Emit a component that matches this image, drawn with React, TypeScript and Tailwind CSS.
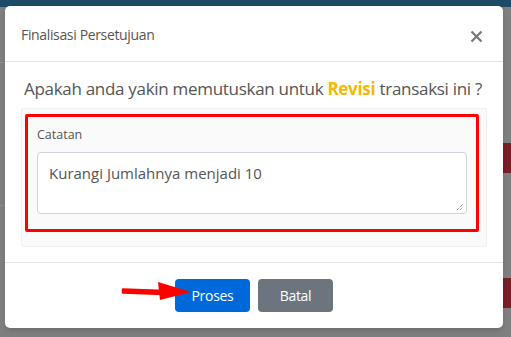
import React from 'react';

const font = { fontFamily: '"Open Sans", "Noto Sans", sans-serif' };

export default function App() {
  return (
    <div className="relative w-[511px] h-[337px] overflow-hidden bg-[#7f7f7f]" style={font}>
      {/* dimmed page behind the modal */}
      <div className="h-[7px] bg-[#1d4a67]" />
      <div className="absolute left-0 top-[62px] w-[5px] h-px bg-[#8c8c8c]" />
      <div className="absolute left-0 top-[205px] w-[5px] h-px bg-[#8c8c8c]" />
      <div className="absolute right-0 top-[143px] w-[8px] h-[30px] bg-[#7a1e28]" />
      <div className="absolute right-0 top-[278px] w-[8px] h-[30px] bg-[#7a1e28]" />

      {/* modal */}
      <div className="absolute left-[5px] top-[6px] w-[498px] bg-white rounded-[5px] shadow-md">
        <div className="h-[56px] px-4 flex items-center justify-between border-b border-[#e3e3e8]">
          <h2 className="text-[14px] text-[#555] pt-[1px] tracking-[-0.35px]">Finalisasi Persetujuan</h2>
          <button className="mr-[4px] mt-[6px] text-[#777]">
            <svg width="13" height="13" viewBox="0 0 13 13">
              <path d="M1.5 1.5 L11.5 11.5 M11.5 1.5 L1.5 11.5" stroke="#777" strokeWidth="2.2" />
            </svg>
          </button>
        </div>

        <div className="px-4 pb-[15px] pt-[15px] border-b border-[#e3e3e8]">
          <p className="text-[17px] text-[#555] pl-[3px] leading-[24px] tracking-[-0.3px]">
            Apakah anda yakin memutuskan untuk <span className="font-bold text-[#f7b900]">Revisi</span> transaksi ini ?
          </p>
          <div className="mt-[7px] bg-[#fafafa] border border-[#f0f0f0] rounded-[2px] pt-[5px] pl-[3px] pr-[7px] pb-[14px]">
            <div className="border-[3px] border-[#ff0000] rounded-[2px] px-[9px] pt-[9px] pb-[15px]">
              <label className="block text-[12.5px] text-[#555] leading-[18px]">Catatan</label>
              <div className="relative mt-[8px] h-[62px] bg-white border border-[#cfd3dc] rounded-[4px] px-[11px] pt-[8px]">
                <span className="text-[15px] text-[#555] leading-[22px]">Kurangi Jumlahnya menjadi 10</span>
                <svg className="absolute right-[2px] bottom-[2px]" width="8" height="8" viewBox="0 0 8 8">
                  <path d="M1 7 L7 1 M4 7 L7 4" stroke="#666" strokeWidth="1" strokeDasharray="1 1" />
                </svg>
              </div>
            </div>
          </div>
        </div>

        <div className="relative flex justify-center gap-[8px] pt-[16px] pb-[16px]">
          <button className="w-[75px] h-[33px] rounded-[4px] bg-[#0069d9] text-white text-[14px] tracking-[-0.3px]">Proses</button>
          <button className="w-[75px] h-[33px] rounded-[4px] bg-[#6c757d] text-white text-[14px] tracking-[-0.3px]">Batal</button>
          <svg className="absolute left-[115px] top-[18px]" width="75" height="22" viewBox="0 0 75 22">
            <path d="M3 8.5 L44 10 L44 13 L3 11.5 Z" fill="#f00" strokeLinejoin="round" stroke="#f00" strokeWidth="2.5" />
            <path d="M38 1 L71 11 L40 19 Z" fill="#f00" />
          </svg>
        </div>
      </div>
    </div>
  );
}
